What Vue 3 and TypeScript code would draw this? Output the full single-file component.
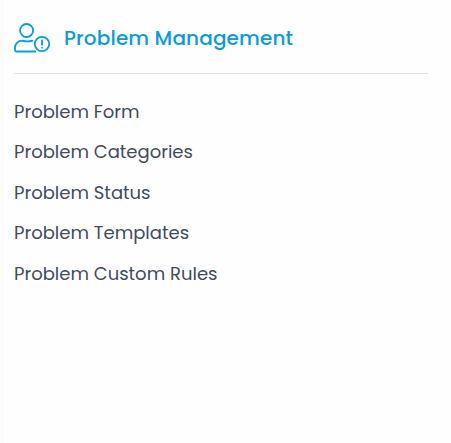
<script setup lang="ts">
interface MenuItem {
  label: string
  key: string
}

const items: MenuItem[] = [
  { label: 'Problem Form', key: 'form' },
  { label: 'Problem Categories', key: 'categories' },
  { label: 'Problem Status', key: 'status' },
  { label: 'Problem Templates', key: 'templates' },
  { label: 'Problem Custom Rules', key: 'rules' },
]
</script>

<template>
  <section class="panel">
    <header class="panel-header">
      <svg class="panel-icon" viewBox="0 0 37 33" fill="none" stroke="currentColor" stroke-width="1.8" stroke-linecap="round" stroke-linejoin="round" aria-hidden="true">
        <circle cx="12.6" cy="9.5" r="6.5" />
        <path d="M18.5 19.6C15.2 20.8 11.2 20.5 8.2 19.6C4.2 19.4 1.1 22.8 1 26.6V29.3Q1 30.5 2.2 30.5H21.3" />
        <circle cx="28" cy="23" r="7.2" />
        <path d="M28 19.4V23.8M28 26.6V26.7" />
      </svg>
      <h2 class="title">Problem Management</h2>
    </header>
    <ul class="menu">
      <li v-for="item in items" :key="item.key" class="menu-item">
        <a class="link">{{ item.label }}</a>
      </li>
    </ul>
  </section>
</template>

<style>
body {
  background: #fefefe;
}
</style>

<style scoped>
.panel {
  box-sizing: border-box;
  height: 443px;
  margin-left: 2px;
  padding: 14px 23px 0 11px;
  border-left: 1px solid #fafafb;
  font-family: Poppins, Inter, sans-serif;
}

.panel-header {
  display: flex;
  align-items: center;
  gap: 13px;
  height: 60px;
  padding-bottom: 12px;
  box-sizing: border-box;
  border-bottom: 1px solid #dfe1ef;
  color: #0b9bdb;
}

.panel-icon {
  width: 37px;
  height: 33px;
}

.title {
  margin: 0;
  font-size: 20px;
  font-weight: 500;
  line-height: 30px;
  letter-spacing: 0.14px;
  white-space: nowrap;
}

.menu {
  margin: 0;
  padding: 17.6px 0 0;
  list-style: none;
}

.menu-item {
  height: 40.5px;
  line-height: 40.5px;
}

.link {
  color: #414a60;
  font-size: 18px;
  white-space: nowrap;
}
</style>
